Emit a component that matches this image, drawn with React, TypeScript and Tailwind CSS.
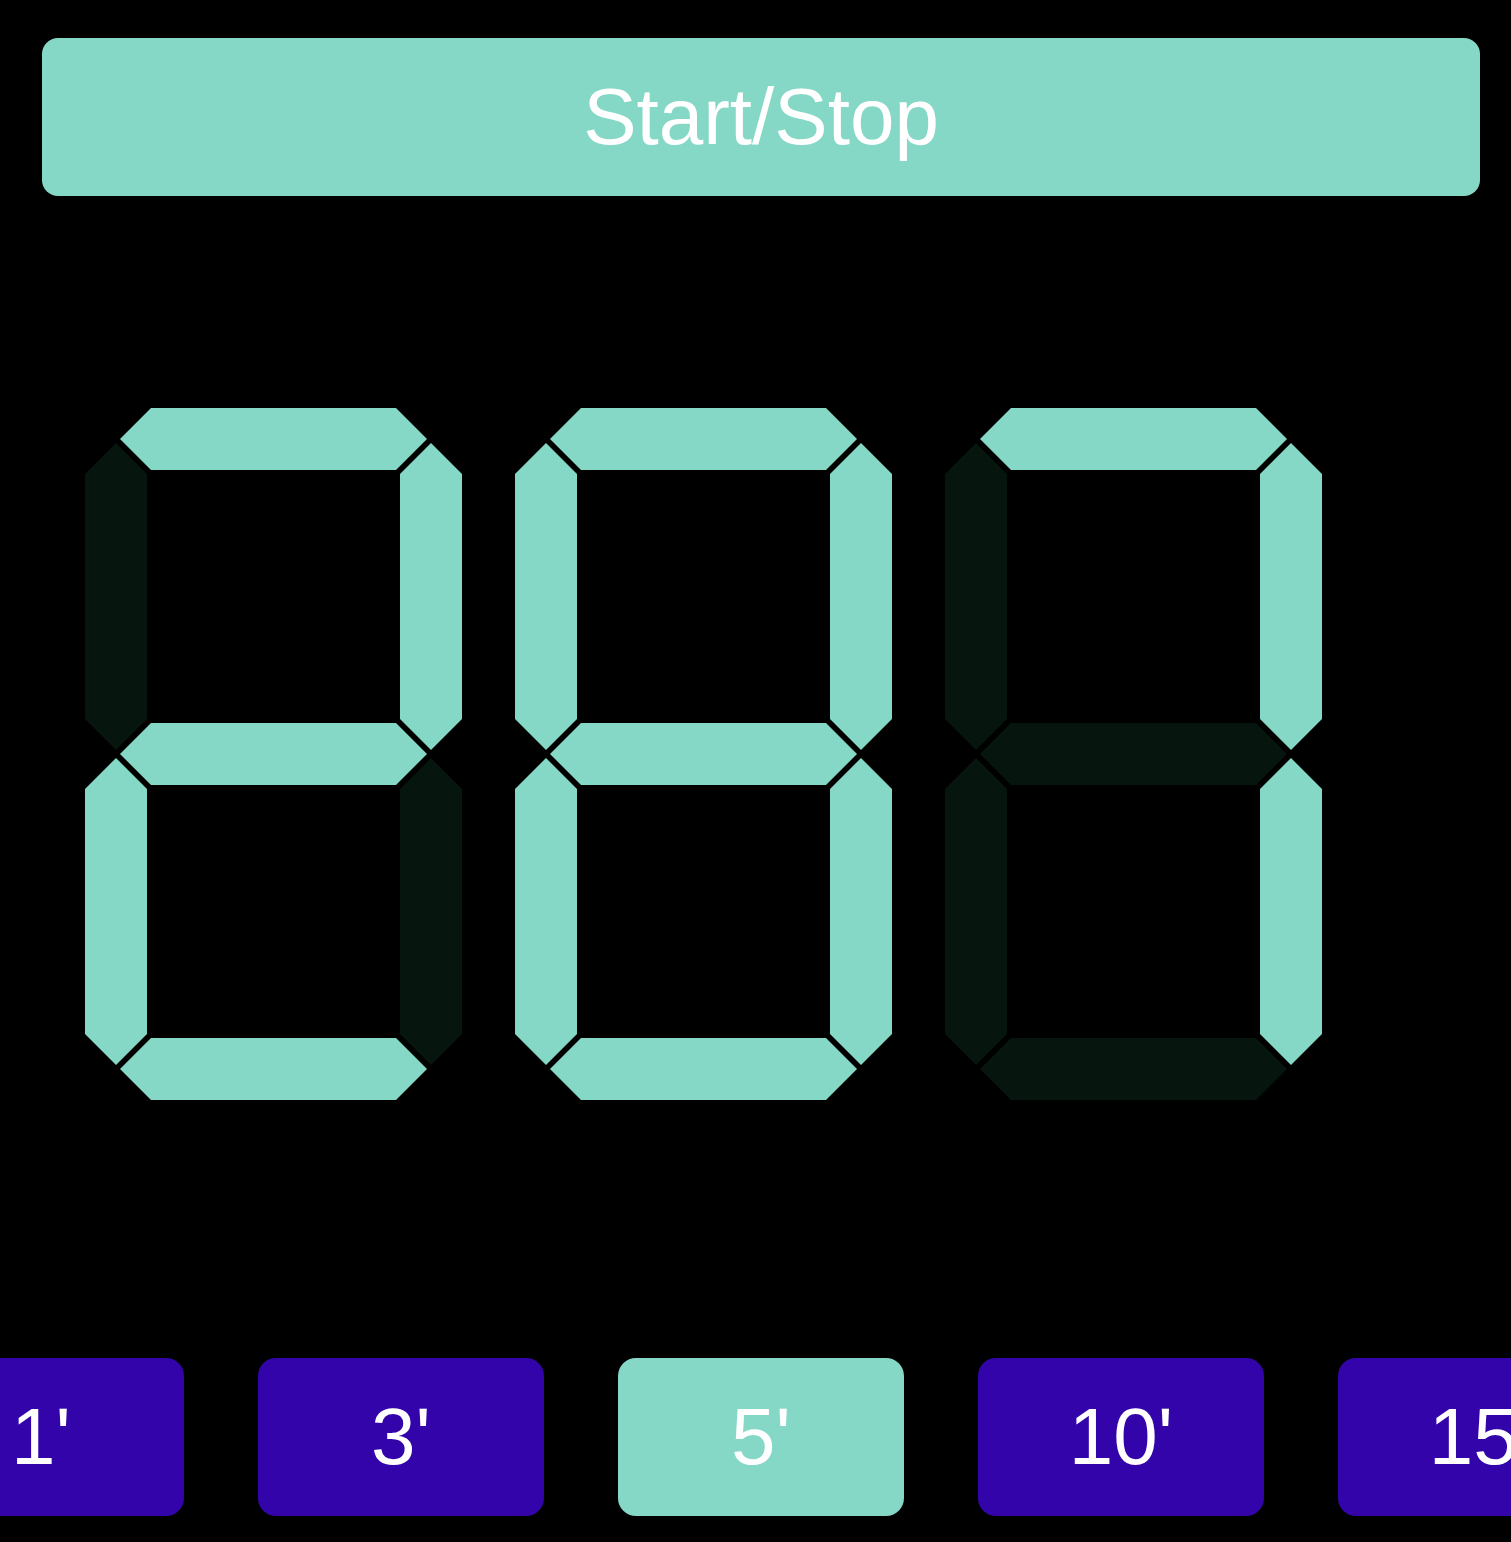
import { useState } from "react"

const ON = "#85d8c6"
const OFF = "#06150d"

// segment order: a b c d e f g
const digitMap: Record<string, boolean[]> = {
  "0": [true, true, true, true, true, true, false],
  "1": [false, true, true, false, false, false, false],
  "2": [true, true, false, true, true, false, true],
  "3": [true, true, true, true, false, false, true],
  "4": [false, true, true, false, false, true, true],
  "5": [true, false, true, true, false, true, true],
  "6": [true, false, true, true, true, true, true],
  "7": [true, true, true, false, false, false, false],
  "8": [true, true, true, true, true, true, true],
  "9": [true, true, true, true, false, true, true],
}

const T = 62
const H = T / 2
const G = 4
const X1 = H
const X2 = 377 - H
const Y1 = H
const Y2 = 346
const Y3 = 692 - H

function hSeg(cy: number) {
  const a = X1 + G
  const b = X2 - G
  return `${a},${cy} ${a + H},${cy - H} ${b - H},${cy - H} ${b},${cy} ${b - H},${cy + H} ${a + H},${cy + H}`
}

function vSeg(cx: number, y1: number, y2: number) {
  const a = y1 + G
  const b = y2 - G
  return `${cx},${a} ${cx + H},${a + H} ${cx + H},${b - H} ${cx},${b} ${cx - H},${b - H} ${cx - H},${a + H}`
}

const segments = [
  hSeg(Y1),
  vSeg(X2, Y1, Y2),
  vSeg(X2, Y2, Y3),
  hSeg(Y3),
  vSeg(X1, Y2, Y3),
  vSeg(X1, Y1, Y2),
  hSeg(Y2),
]

function Digit({ value }: { value: string }) {
  const lit = digitMap[value] ?? digitMap["8"]
  return (
    <svg width="377" height="692" viewBox="0 0 377 692" className="shrink-0">
      {segments.map((points, i) => (
        <polygon key={i} points={points} fill={lit[i] ? ON : OFF} />
      ))}
    </svg>
  )
}

const presets = [1, 3, 5, 10, 15]

export default function App() {
  const [selected, setSelected] = useState(5)

  return (
    <div className="w-full min-h-[1542px] overflow-hidden bg-black" style={{ fontFamily: '"Liberation Sans", Arial, sans-serif' }}>
      <div className="flex w-[1522px] flex-col">
        <button className="mx-[42px] mt-[38px] flex h-[158px] items-center justify-center rounded-[16px] bg-[#85d8c6] text-[80px] leading-none text-white">
          Start/Stop
        </button>

        <div className="mt-[212px] flex gap-[53px] pl-[85px]">
          <Digit value="2" />
          <Digit value="8" />
          <Digit value="7" />
        </div>

        <div className="mt-[258px] flex justify-center gap-[74px]">
          {presets.map((m) => (
            <button
              key={m}
              onClick={() => setSelected(m)}
              className={
                m === selected
                  ? "flex h-[158px] w-[286px] shrink-0 items-center justify-center rounded-[18px] bg-[#85d8c6] text-[80px] leading-none text-white"
                  : "flex h-[158px] w-[286px] shrink-0 items-center justify-center rounded-[18px] bg-[#3304aa] text-[80px] leading-none text-white"
              }
            >
              {m}'
            </button>
          ))}
        </div>
      </div>
    </div>
  )
}
